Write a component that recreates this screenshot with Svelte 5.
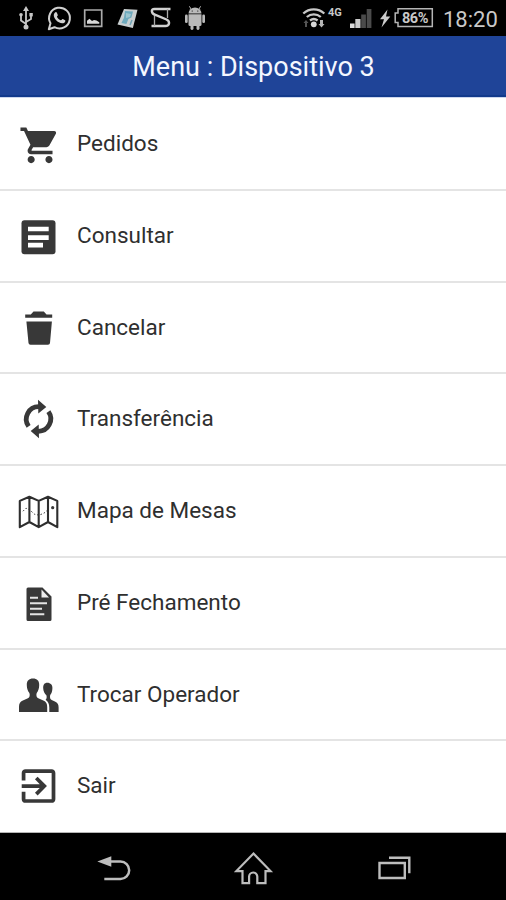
<script lang="ts">
  type Item = { id: string; label: string };

  const title = 'Menu : Dispositivo 3';

  const items: Item[] = [
    { id: 'cart', label: 'Pedidos' },
    { id: 'article', label: 'Consultar' },
    { id: 'trash', label: 'Cancelar' },
    { id: 'transfer', label: 'Transferência' },
    { id: 'map', label: 'Mapa de Mesas' },
    { id: 'file', label: 'Pré Fechamento' },
    { id: 'users', label: 'Trocar Operador' },
    { id: 'exit', label: 'Sair' }
  ];

  let selected = $state('');
</script>

<div class="screen">
  <div class="status-bar">
    <div class="notifications">
      <!-- usb -->
      <svg width="34" height="36" viewBox="0 0 34 36">
        <g fill="none" stroke="#c6c6c6" stroke-width="1.8">
          <path d="M17 27V9M17 24l-5-3.500v-5M17 22l5-3v-4" />
        </g>
        <path d="M17 6l3 5h-6z" fill="#c6c6c6" />
        <circle cx="17" cy="27" r="2.500" fill="#c6c6c6" />
        <circle cx="12" cy="14.800" r="1.800" fill="#c6c6c6" />
        <path d="M20.400 13h3.400v3.400h-3.400z" fill="#c6c6c6" />
      </svg>
      <!-- whatsapp -->
      <svg width="34" height="36" viewBox="0 0 34 36">
        <path d="M5.800 29.200l1.700-5.900a10.400 10.400 0 1 1 4 3.900z" fill="none" stroke="#d0d0d0" stroke-width="2" stroke-linejoin="round" />
        <path d="M11.800 12.700c.8-.9 1.700-.8 2.100.1l.9 2.100c.2.600-1 1.500-.8 2 .8 1.500 2.100 2.700 3.800 3.400.6.200 1.300-1.500 2-1.200l2.300 1.100c.7.400-.1 2-.8 2.500-1.600 1.100-3.700.5-5.400-.4-2-1.100-3.700-2.900-4.600-4.900-.7-1.600-.8-3.400.5-4.700z" fill="#d0d0d0" />
      </svg>
      <!-- picture -->
      <svg width="34" height="36" viewBox="0 0 34 36">
        <path d="M7.700 10h17v16.300h-17z" fill="none" stroke="#aaa" stroke-width="1.700" />
        <path d="M10 23.800v-3l2.500-2 2.500 2.200 2-1 2.500.6 2.800 1.700v1.500z" fill="#d8d8d8" />
      </svg>
      <!-- notes -->
      <svg width="34" height="36" viewBox="0 0 34 36">
        <path d="M13 9l13.500.8-4.600 18.300-15.400-3.600z" fill="#c9cfd0" />
        <path d="M14 11l8 .5-1.600 6-3 1.500-2 5-5-1 2.500-5z" fill="#6faabd" />
        <path d="M15 13l5 1-1 3-4 1z" fill="#9cc5cf" />
        <path d="M21 20l-2 5" stroke="#71a5b5" stroke-width="1.500" />
      </svg>
      <!-- S app -->
      <svg width="34" height="36" viewBox="0 0 34 36">
        <path d="M25.500 9H9.500q-3 0-2.600 2.500t3.600 3.500l11 4.500q3 1.500 2.500 4t-3.500 2.500H6.500" fill="none" stroke="#d0d0d0" stroke-width="2.400" />
        <path d="M22.500 9v9M9.500 16v10" fill="none" stroke="#aaa" stroke-width="1.300" />
      </svg>
      <!-- android -->
      <svg width="34" height="36" viewBox="0 0 34 36">
        <g fill="#b9b9b9">
          <path d="M9.500 13.600a6.500 6 0 0 1 13 0z" />
          <path d="M9.500 14.300h13v10.200a1.500 1.500 0 0 1-1.500 1.500H11a1.500 1.500 0 0 1-1.500-1.500z" />
          <rect x="6" y="14.500" width="2.700" height="8.500" rx="1.300" />
          <rect x="23.300" y="14.500" width="2.700" height="8.500" rx="1.300" />
          <rect x="11.500" y="24" width="3" height="6" rx="1.400" />
          <rect x="17.500" y="24" width="3" height="6" rx="1.400" />
        </g>
        <path d="M12 9l-1.600-2.700M20 9l1.600-2.700" stroke="#b9b9b9" stroke-width="1" />
        <circle cx="13.200" cy="11" r=".6" />
        <circle cx="18.800" cy="11" r=".6" />
      </svg>
    </div>

    <div class="system">
      <svg width="24" height="36" viewBox="0 0 24 36">
        <g fill="none" stroke="#c8c8c8" stroke-width="2.300">
          <path d="M1.300 13.500a15.500 15.500 0 0 1 21 0" />
          <path d="M4.800 17a10.500 10.500 0 0 1 14 0" />
          <path d="M8 20.500a6 6 0 0 1 7.600 0" />
        </g>
        <circle cx="11.800" cy="24.300" r="2.900" fill="#d8d8d8" />
        <path d="M4 20l2.500 3H5v4H3v-4H1.500z" fill="#555" />
        <path d="M19.500 27.500l-3-3.500H18v-4h3v4h1.500z" fill="#b5b5b5" />
      </svg>
      <span class="network">4G</span>
      <svg class="signal" width="24" height="36" viewBox="0 0 24 36">
        <path d="M1 23.500h4.600V28H1z" fill="#ddd" />
        <path d="M6.300 19h5.200v9H6.300z" fill="#ccc" />
        <path d="M12.200 14.500h4.700V28h-4.700z" fill="#4b4b4b" />
        <path d="M17.700 9h4.700v19h-4.700z" fill="#4b4b4b" />
      </svg>
      <svg class="bolt" width="12" height="36" viewBox="0 0 12 36">
        <path d="M8.500 9.500L1 19.200h4L2.500 27.500 11.300 16.500H7z" fill="#ccc" />
      </svg>
      <div class="battery">
        <svg width="40" height="36" viewBox="0 0 40 36">
          <path d="M4 8.800h34.300v17.700H4v-4H1.200v-9.500H4z" fill="none" stroke="#b5b5b5" stroke-width="1.500" />
        </svg>
        <span>86%</span>
      </div>
      <span class="clock">18:20</span>
    </div>
  </div>

  <header class="title-bar">
    <h1>{title}</h1>
  </header>

  <ul class="menu">
    {#each items as item (item.id)}
      <li>
        <button class="row" class:active={selected === item.id} onclick={() => (selected = item.id)}>
          <svg class="icon" width="76" height="90" viewBox="0 0 76 90">
            {#if item.id === 'cart'}
              <g transform="translate(18.700 25) scale(1.780)">
                <path d="M7 18c-1.100 0-1.990.9-1.990 2S5.900 22 7 22s2-.9 2-2-.9-2-2-2zM1 2v2h2l3.600 7.590-1.350 2.450c-.16.280-.25.610-.25.960 0 1.100.9 2 2 2h12v-2H7.420c-.14 0-.25-.11-.25-.25l.03-.12.9-1.630h7.450c.75 0 1.410-.41 1.750-1.030l3.580-6.490c.08-.14.12-.31.12-.48 0-.55-.45-1-1-1H5.210l-.94-2H1zm16 16c-1.100 0-1.990.9-1.990 2s.89 2 1.990 2 2-.9 2-2-.9-2-2-2z" />
              </g>
            {:else if item.id === 'article'}
              <rect x="21.500" y="29.300" width="34" height="34" rx="3" />
              <path d="M28 35.700h20.700v4.600H28zM28 44.300h20.700v4.600H28zM28 51.800h15v4.600H28z" fill="#fff" />
            {:else if item.id === 'trash'}
              <path d="M25.200 34.800v-3.400h5.600l2.700-2.800h10.300l2.700 2.800h5.700v3.400zM26.400 38.500h25.500L50 60q-.2 1.700-2 1.700H30.500q-1.800 0-2-1.700z" />
            {:else if item.id === 'transfer'}
              <path d="M28.600 52.300A12.400 12.400 0 0 1 39 32.700M48.400 37.700A12.400 12.400 0 0 1 38 57.300" fill="none" stroke="#383838" stroke-width="4.800" />
              <path d="M38 25.800l8.300 7.200-8 6.500zM39 64.200L30.700 57l8-6.500z" />
            {:else if item.id === 'map'}
              <g fill="none" stroke="#2e2e2e" stroke-width="2.100" stroke-linejoin="round">
                <path d="M19.800 34.900l9.600-4.200 9.300 4.200 9.300-4.200 9.300 4.200v26.300L48 56l-9.300 5.200L29.400 56l-9.600 5.200zM29.400 30.700V56M38.700 34.900v26.300M48 30.700V56" />
                <path d="M23 45.200l3-3 3.500 1.500 5 4.500 4.500 1 5-2 4.500-4" stroke-width="1" stroke-dasharray="1.500 2" />
              </g>
              <circle cx="52.700" cy="41.700" r="1.600" />
            {:else if item.id === 'file'}
              <path d="M28 29.500h14.500l9 9v22.900a1.500 1.500 0 0 1-1.500 1.500H28a1.500 1.500 0 0 1-1.500-1.500V31a1.500 1.500 0 0 1 1.500-1.500z" />
              <path d="M41.500 31.600v8H49z" fill="#eee" />
              <path d="M30 39.700h8M30 45.200h17M30 50.700h12M30 56.300h14.300" stroke="#e4e4e4" stroke-width="1.900" />
            {:else if item.id === 'users'}
              <path d="M33 28.600c4 0 6.400 2.400 6.200 6.400 0 3.400-1 6.200-2.500 8-.7 2.600-.2 4.400 1.600 5.300l5 2.200c2.900 1.300 3.900 3.300 3.900 6.500v5H19v-5c0-3.200 1-5.200 3.900-6.500l5-2.200c1.800-.9 2.200-2.700 1.500-5.300-1.600-1.800-2.600-4.600-2.600-8-.2-4 2.200-6.400 6.200-6.400z" />
              <path d="M47.300 32.800c3.300 0 5.300 2.300 5.100 5.500 0 2.900-.9 5.200-2.200 6.700-.5 2.500-.1 4.200 1.500 5l3.200 1.500c2.600 1.200 3.700 3 3.700 5.700V62h-9.300v-4.500c0-3.500-1.200-6-3.700-7.700 1-.8 1.400-2.300.8-4.500-1.700-1.500-3.200-4.200-3.200-7-.1-3.300 1.100-5.500 4.100-5.500z" />
            {:else}
              <g transform="translate(16.100 22.600) scale(1.870)">
                <path d="M10.090 15.590L11.500 17l5-5-5-5-1.410 1.410L12.670 11H3v2h9.670l-2.580 2.590zM19 3H5c-1.110 0-2 .9-2 2v4h2V5h14v14H5v-4H3v4c0 1.100.89 2 2 2h14c1.100 0 2-.9 2-2V5c0-1.100-.9-2-2-2z" />
              </g>
            {/if}
          </svg>
          <span class="label">{item.label}</span>
        </button>
      </li>
    {/each}
  </ul>

  <nav class="nav-bar">
    <svg width="34" height="30" viewBox="97 852 34 30">
      <path d="M97.300 860.500l14-5.300v10.600z" fill="#bdbdbd" />
      <path d="M109 860.500h11.500a8.700 8.700 0 0 1 0 17.400h-16.200" fill="none" stroke="#bdbdbd" stroke-width="2.500" />
    </svg>
    <svg width="40" height="34" viewBox="234 850 40 34">
      <path d="M253.500 852.600l17 17.500h-5v12h-8.200v-6.500a4.100 4.100 0 0 0-8.200 0v6.500h-6.600v-12h-6.100z" fill="none" stroke="#bdbdbd" stroke-width="2.200" />
    </svg>
    <svg width="34" height="26" viewBox="377 854 34 26">
      <path d="M379.500 862h25.300v15h-25.300zM389 856.700h20.300v15.500" fill="none" stroke="#bdbdbd" stroke-width="2.400" />
    </svg>
  </nav>
</div>

<style>
  :global(body) {
    background: #fff;
  }

  .screen {
    display: flex;
    flex-direction: column;
    width: 506px;
    height: 900px;
    overflow: hidden;
    font-family: Roboto, 'Liberation Sans', sans-serif;
  }

  svg {
    display: block;
    flex: none;
  }

  .status-bar {
    display: flex;
    justify-content: space-between;
    height: 36px;
    background: #000;
    color: #c8c8c8;
  }

  .notifications {
    display: flex;
    padding-left: 9px;
  }

  .system {
    display: flex;
    align-items: center;
    padding-right: 8px;
  }

  .network {
    width: 17px;
    margin: 0 0 11px 2px;
    font-size: 11px;
    font-weight: 700;
    line-height: 12px;
  }

  .signal {
    margin-left: 4px;
  }

  .bolt {
    margin-left: 6px;
  }

  .battery {
    display: grid;
    margin-left: 3px;
  }

  .battery svg,
  .battery span {
    grid-area: 1 / 1;
  }

  .battery span {
    place-self: center;
    padding-left: 2px;
    font-size: 14.500px;
    font-weight: 700;
    letter-spacing: -0.400px;
  }

  .clock {
    width: 55px;
    margin: 2px 0 0 9px;
    font-size: 22px;
    white-space: nowrap;
  }

  .title-bar {
    display: flex;
    align-items: center;
    justify-content: center;
    box-sizing: border-box;
    height: 62px;
    padding-left: 1px;
    border-bottom: 1px solid #cdd7ee;
    background: #1f4498;
    box-shadow: inset 0 -2px 0 #123a8c;
  }

  h1 {
    margin: 0;
    color: #f4f7ff;
    font-size: 27px;
    font-weight: 400;
    line-height: 32px;
  }

  .menu {
    display: grid;
    grid-template-rows: repeat(8, 1fr);
    box-sizing: border-box;
    height: 735px;
    margin: 0;
    padding: 1px 0 0;
    list-style: none;
    background: #fff;
  }

  .menu li {
    box-sizing: border-box;
    min-height: 0;
    border-bottom: 2px solid #e4e4e4;
    overflow: hidden;
  }

  .menu li:last-child {
    border-bottom: 1px solid #b5b5b5;
  }

  .row {
    display: flex;
    align-items: flex-start;
    width: 100%;
    padding: 0;
    border: 0;
    background: none;
    color: #2f2f2f;
    font-family: inherit;
    text-align: left;
    cursor: pointer;
  }

  .row.active {
    background: #f2f5fc;
  }

  .icon {
    fill: #383838;
  }

  .label {
    margin-top: 30px;
    padding-left: 1px;
    font-size: 22.500px;
    line-height: 28px;
    white-space: nowrap;
  }

  .nav-bar {
    display: flex;
    justify-content: space-between;
    align-items: center;
    box-sizing: border-box;
    height: 67px;
    padding: 2px 95px 0 97px;
    background: #000;
  }
</style>
